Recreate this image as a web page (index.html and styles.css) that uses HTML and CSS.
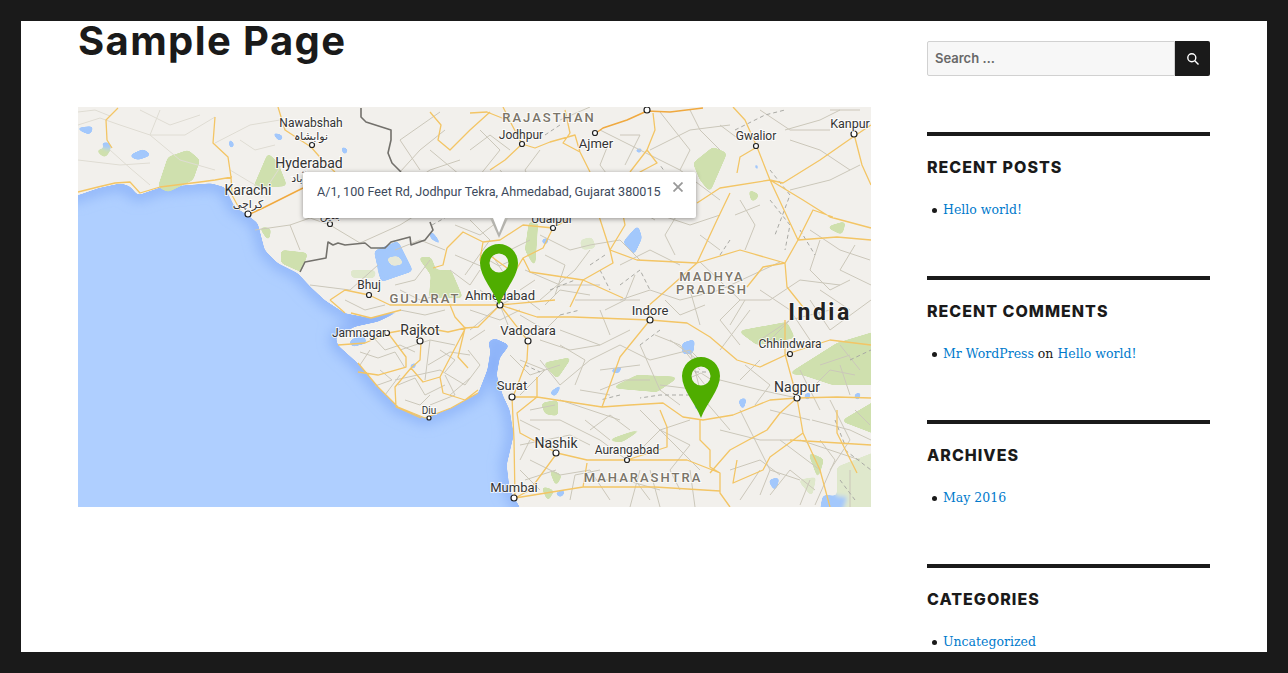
FILE: index.html
```html
<!DOCTYPE html>
<html lang="en">
<head>
    <meta charset="UTF-8">
    <title>Sample Page</title>
    <link rel="stylesheet" href="styles.css">
</head>
<body>
<div class="site">
    <main class="content">
        <h1 class="entry-title">Sample Page</h1>
        <div class="map">
            <svg class="map-canvas" viewBox="78 107 793 400" width="793" height="400">
                <defs>
                    <filter id="coast-blur" x="-10%" y="-10%" width="120%" height="120%"><feGaussianBlur stdDeviation="7"/></filter>
                    <!-- rounds off the corners of hand-drawn polygons -->
                    <filter id="smooth" x="-5%" y="-5%" width="110%" height="110%">
                        <feGaussianBlur stdDeviation="2"/>
                        <feColorMatrix type="matrix" values="1 0 0 0 0 0 1 0 0 0 0 0 1 0 0 0 0 0 12 -5"/>
                    </filter>
                    <filter id="soften" x="-5%" y="-5%" width="110%" height="110%"><feGaussianBlur stdDeviation="0.3"/></filter>
                </defs>
                <rect class="sea" x="78" y="107" width="793" height="400"/>
                <path class="coast-glow" filter="url(#coast-blur)" d="M60 197 78 195 98 188 121 183 138 195 161 187 211 183 225 187 235 207 248 215 258 223 265 250 278 263 298 273 311 287 325 300 345 313 371 318 398 310 378 322 355 327 336 337 338 345 358 363 378 387 398 407 425 418 451 408 478 393 487 370 490 352 488 341 495 338 510 345 500 358 497 375 503 395 510 410 514 435 507 465 510 490 520 507 525 525"/>
                <path class="land" filter="url(#smooth)" d="M60 197 78 195 98 188 121 183 130 186 138 195 161 187 211 183 225 187 235 207 248 215 258 223 265 250 278 263 298 273 311 287 325 300 345 313 371 318 398 310 400 312 378 322 355 327 336 337 338 345 358 363 378 387 398 407 425 418 451 408 478 393 487 370 490 352 488 341 495 338 510 345 500 358 497 375 503 395 510 410 514 435 507 465 510 490 520 507 525 525 890 525 890 90 60 90Z"/>

                <g filter="url(#smooth)">
                    <path class="park" d="M168 157 188 150 200 160 193 180 168 192 158 187ZM268 153 278 163 287 186 253 188ZM281 250 308 253 301 272 281 263ZM259 227 271 228 269 242ZM418 257 431 257 436 270 451 270 463 298 429 298 431 275ZM529 222 538 222 535 268 525 250ZM693 163 713 147 727 153 710 192 700 180ZM826 227 846 221 842 235ZM611 388 637 375 679 377 657 392ZM543 363 572 357 557 379ZM541 403 558 400 558 416 545 414ZM738 331 787 322 795 338 757 345ZM788 374 837 343 880 330 880 385 833 385 803 375ZM808 452 824 459 818 479ZM605 441 648 426 622 442ZM841 421 880 398 880 436ZM748 189 760 195 752 203ZM549 469 562 475 556 487ZM541 486 554 490 548 502ZM95 150 112 148 105 158Z"/>
                    <path class="park-light" d="M350 270 375 270 375 278 352 278ZM580 240 592 237 596 248 582 250ZM837 467 880 450 880 515 837 515ZM798 480 816 477 812 497Z"/>
                    <path class="water" d="M374 251 398 241 413 271 381 282ZM430 229 445 248 430 238ZM638 225 642 238 634 255 623 242ZM682 343 695 339 693 354 682 354ZM549 393 564 382 555 397ZM74 128 94 126 90 135ZM99 142 112 143 108 150ZM128 156 143 149 152 155 138 160ZM270 131 284 136 280 142ZM340 145 349 150 344 156ZM228 136 235 145 230 150ZM633 150 644 147 640 154ZM540 240 550 237 546 246ZM498 211 512 205 508 214ZM693 405 702 401 698 412ZM738 400 747 397 743 412ZM853 395 862 391 858 402ZM803 395 812 391 808 402ZM823 495 847 497 842 512 820 510ZM768 480 780 477 775 492ZM608 371 624 365 618 374ZM554 493 567 489 561 498ZM349 341 363 334 367 343 352 347ZM408 366 418 361 414 370ZM756 160 760 172 754 168Z"/>
                </g>
                <path class="lake-isle" filter="url(#smooth)" d="M386 258 398 256 404 264 392 266Z"/>

                <g filter="url(#soften)">
                    <path class="road-faint" d="M78 125 100 118 120 125 150 135 185 135 215 117M78 160 120 165 150 163M110 150 130 168 150 185M280 120 250 125 215 143M230 170 250 182 265 190 285 160M78 112 95 110 110 116M140 110 170 125 200 115M150 135 180 160 215 170M240 140 255 150 275 145M160 110 150 135"/>
                    <path class="road-minor" d="M255 230 290 225 310 218 330 225 360 243M290 225 300 250M320 220 335 200 360 180M360 243 400 225 432 205M400 172 420 150 445 130M400 190 430 170 460 160M440 112 400 140 420 170M310 285 350 290 378 265M470 220 490 240 465 275M540 235 570 250 590 245 620 240 640 260M500 170 520 195 560 210 590 215M600 130 640 150 680 170 720 200M650 150 690 130 730 125M660 112 690 150 680 170M785 130 820 120 840 110M790 190 830 180 860 165M700 262 740 300 770 300 800 280 840 285M680 300 720 290 780 262M810 300 830 330 871 300M590 360 620 345 650 360 690 350 720 380M640 345 660 390 680 405M720 380 760 390 797 398M540 360 560 385 590 360M530 420 560 420 600 440 627 460M640 410 670 440 700 470M720 430 760 440 790 440M740 410 770 470 800 480M812 420 850 430 871 440M830 400 850 440 830 470M530 460 560 475 590 470M590 470 610 500M650 470 660 507M690 470 695 507M770 470 760 495M850 470 850 507M800 440 860 460M540 300 575 270 590 250M525 270 560 285 600 285M455 255 490 270M540 340 570 350 600 345M740 345 720 320 740 300M700 325 690 290"/>
                    <path class="road-minor" d="M470 310 500 320 520 310M480 290 500 305 520 295 540 310M490 285 500 305 510 330M470 330 500 305M400 350 430 340 455 345M430 340 425 380M395 380 440 370 465 385M520 360 545 370 520 395M520 420 540 430M520 445 545 440 556 453M525 480 556 470M560 400 590 410 620 420M655 335 680 345 700 370M620 300 650 290 680 300M840 345 860 370M820 365 850 355M760 360 740 380M770 410 810 420M690 420 660 430 640 450M560 120 590 107M690 110 700 130M760 110 790 130 830 130"/>
                    <path class="road-minor" d="M372 336 385 350 400 345 415 352M360 352 378 358 395 352 405 368M380 370 392 380 375 386M398 385 415 378 425 395 445 385M405 400 420 405 430 395M440 350 455 360 445 372M428 365 450 352 470 355M450 395 470 378M470 340 485 330M345 300 365 310 385 305M400 290 420 300 440 295M395 250 420 240 445 250M450 270 470 285 480 270M520 315 545 330 560 315M510 355 530 375 560 365M560 330 600 345 630 330M600 310 610 335M575 300 610 300 640 300M620 265 650 250 680 265M660 215 690 225 720 215M590 180 620 190 650 185M700 130 720 150M720 125 740 140M790 140 820 150 850 170M830 110 860 110M810 230 840 250 870 260M820 290 850 310M760 290 790 310 810 340M720 350 750 310M670 340 705 365M600 370 640 365M580 390 610 395M545 440 570 435 590 445M660 430 690 445M730 470 760 460 780 475M780 440 820 470M820 410 800 370M840 365 850 395M730 430 700 395 720 380M640 470 630 507M590 480 625 480 660 490M740 500 760 470M800 505 810 480M530 410 555 405M520 470 540 490M650 380 625 380 600 390M585 420 610 440M760 340 790 320 830 310"/>
                    <path class="road-minor" d="M485 258 499 266 515 259M490 252 503 272M685 380 701 373 718 384M692 368 705 385M540 150 525 170 535 190 565 195M480 130 500 150 480 175M610 140 600 165 615 185M665 195 680 210 665 235 675 255M740 200 755 225 745 250M820 240 810 270 830 290 850 280M855 245 840 270 871 285M605 310 625 300 635 275M665 300 680 315 705 305M745 300 730 325M770 340 790 320M560 345 585 360 575 385M590 430 610 415 630 430M660 385 700 390 690 350M745 365 770 385 755 405M815 385 830 370 855 375M690 445 670 470 680 490M600 470 575 475 570 500M635 480 650 500M770 495 790 470 815 490M530 440 520 460M855 410 870 425M820 440 835 460 815 505M450 200 470 205 490 195M500 220 480 235 455 225M430 260 415 280 395 285M400 310 425 315 445 310M370 350 360 365M385 395 400 375M430 405 455 395 445 375M468 350 480 365 465 385M545 255 565 265 555 295M510 250 530 240M535 280 520 290M545 305 560 290 590 295M600 215 630 205 655 220M700 235 720 250M735 215 760 205M620 135 640 135 625 165M470 150 490 135 510 150M430 150 460 175"/>
                    <path class="river" d="M690 190 672 182 660 165M735 130 765 115 785 110M770 170 790 195 775 235M770 200 790 225 785 250M620 285 640 270 650 290M600 270 610 290M550 290 575 280M560 315 580 310M590 265 605 255M800 230 815 255M730 240 720 255M840 480 855 500M835 420 845 445M690 395 660 395 640 398M620 395 600 400M640 345 660 330M545 135 560 125M432 225 450 215M525 365 540 372M688 372 712 372M850 360 871 350M845 450 871 470"/>
                    <path class="border" d="M361 108 361 117 366 122 391 130 391 140 388 153 392 163 401 172M300 272 305 262 326 258 328 242 333 245 338 243 345 245 365 243 371 248 385 248 391 242 410 237 411 245 425 240 433 230 430 222"/>

                    <path class="road-major" d="M118 108 106 120 107 140 112 148M78 192 98 187 115 183 130 182 140 193 160 187 200 182 215 180 232 177M215 117 213 143 228 157 231 177 232 195 240 210M278 107 285 130 311 147 325 163 335 172M430 112 441 125 438 140 450 150 470 130 490 112M470 113 487 112 507 120M503 107 512 125 522 144 535 148 550 142 575 135 580 152M522 144 505 160 490 170M565 110 570 133 563 143 580 152M653 113 655 130 647 150 657 163 640 172M647 150 630 172M580 152 590 172M733 107 745 120 757 147 770 180 783 183 820 160 853 137 871 125M737 173 740 157 757 147M854 134 862 165 871 185M770 180 803 200 830 217 871 228M770 180 720 188 697 203M770 180 798 240 813 210 833 217M798 240 837 237 871 240M798 240 785 263 763 267 747 287M785 263 787 287 803 307M697 263 717 220 730 193M697 263 670 287 647 307 650 320M697 263 637 260 610 250 597 210 603 183M610 250 613 263 583 280 570 307M785 263 740 250 697 263"/>
                    <path class="road-major" d="M500 305 537 317 573 317 650 320 687 323 710 337 737 360 760 367 790 353 830 340 871 345M650 320 620 357 602 407M602 407 537 397 513 397M602 407 630 405 663 403 683 417 703 420 733 415 770 400 797 398 837 397 871 398M797 398 780 413 767 430 730 450 710 473M700 420 700 440 710 450 710 467 720 473 720 493 730 507M557 453 587 460 627 460 667 447 667 427 660 410M627 460 687 460 720 473M837 410 837 433 857 473M528 342 527 360 513 397M557 453 530 490 515 498M720 491 655 487 583 487 515 498M537 377 537 397 517 413 520 433 557 453M583 487 587 463M737 460 733 483 763 470 770 457 803 433 797 398M797 398 785 354 785 320M803 433 820 470 830 507M500 305 528 341M512 397 514 440 515 498M790 440 871 445"/>
                    <path class="road-major" d="M338 345 365 343 388 333 421 327 448 332 465 328 478 327 500 305M388 333 406 357 406 367 378 375 358 372M421 342 420 360 411 368 423 382 440 377 466 327M440 377 443 393 465 400 478 390M411 368 395 387 396 407 421 418M448 300 455 317 465 328 458 357 468 368M351 313 371 318 401 310M358 363 378 387 398 407 425 418 451 408 478 393M330 300 345 313M369 295 345 290 330 300M369 295 390 305 437 305 500 305M447 248 463 232 483 242 500 240 523 225 553 228 543 248 523 258 530 272 550 275 583 280 623 298M447 248 443 265 433 268M500 305 510 280 523 258M500 305 480 260 483 242M500 305 555 300M553 228 575 215 590 205M640 172 620 200 625 225 610 250M492 257 507 268"/>
                    <path class="road-trunk" d="M596 133 603 128 627 120 647 111 670 112 703 108M248 215 265 207 285 197 303 188"/>
                </g>

                <g class="city-dots">
                    <circle cx="312" cy="145" r="2.5"/><circle cx="248" cy="214" r="3"/><circle cx="330" cy="224" r="2.5"/>
                    <circle cx="369" cy="295" r="2.5"/><circle cx="387" cy="333" r="2.5"/><circle cx="420" cy="341" r="3"/>
                    <circle cx="429" cy="418" r="2"/><circle cx="500" cy="305" r="3"/><circle cx="522" cy="144" r="2.5"/>
                    <circle cx="595" cy="133" r="2.5"/><circle cx="647" cy="110" r="3"/><circle cx="756" cy="146" r="2.5"/>
                    <circle cx="854" cy="134" r="3"/><circle cx="553" cy="228" r="2.5"/><circle cx="650" cy="320" r="3"/>
                    <circle cx="528" cy="341" r="3"/><circle cx="512" cy="397" r="3"/><circle cx="556" cy="453" r="3"/>
                    <circle cx="514" cy="498" r="3"/><circle cx="627" cy="460" r="2.5"/><circle cx="790" cy="354" r="2.5"/>
                    <circle cx="797" cy="398" r="3"/>
                </g>

                <g class="labels">
                    <text class="city" x="311" y="127">Nawabshah</text>
                    <text class="city urdu" x="311" y="140">نوابشاہ</text>
                    <text class="city big" x="309" y="168">Hyderabad</text>
                    <text class="city urdu" x="309" y="182">حیدرآباد</text>
                    <text class="city big" x="248" y="195">Karachi</text>
                    <text class="city urdu" x="248" y="208">کراچی</text>
                    <text class="city urdu" x="330" y="219">بدین</text>
                    <text class="city" x="369" y="289">Bhuj</text>
                    <text class="city" x="359" y="337">Jamnagar</text>
                    <text class="city big" x="420" y="335">Rajkot</text>
                    <text class="city tiny" x="429" y="414">Diu</text>
                    <text class="city mid" x="500" y="300">Ahmedabad</text>
                    <text class="city" x="521" y="139">Jodhpur</text>
                    <text class="city mid" x="596" y="148">Ajmer</text>
                    <text class="city" x="756" y="140">Gwalior</text>
                    <text class="city kanpur" x="850" y="128">Kanpur</text>
                    <text class="city" x="552" y="223">Udaipur</text>
                    <text class="city mid" x="650" y="315">Indore</text>
                    <text class="city mid" x="528" y="335">Vadodara</text>
                    <text class="city mid" x="512" y="390">Surat</text>
                    <text class="city big" x="556" y="448">Nashik</text>
                    <text class="city" x="627" y="454">Aurangabad</text>
                    <text class="city mid" x="514" y="492">Mumbai</text>
                    <text class="city" x="790" y="348">Chhindwara</text>
                    <text class="city big" x="797" y="392">Nagpur</text>
                    <text class="region" x="425" y="303">GUJARAT</text>
                    <text class="region" x="549" y="122">RAJASTHAN</text>
                    <text class="region" x="712" y="281">MADHYA</text>
                    <text class="region" x="712" y="294">PRADESH</text>
                    <text class="region" x="643" y="482">MAHARASHTRA</text>
                    <text class="country" x="820" y="320">India</text>
                </g>

                <path class="pin" transform="translate(499 244)" d="M0 61C-5 47-19 33-19 19A19 19 0 0 1 19 19C19 33 5 47 0 61ZM0 9.500A9.500 9.500 0 1 0 0 28.500 9.500 9.500 0 1 0 0 9.500Z"/>
                <path class="pin" transform="translate(701 357)" d="M0 61C-5 47-19 33-19 19A19 19 0 0 1 19 19C19 33 5 47 0 61ZM0 9.500A9.500 9.500 0 1 0 0 28.500 9.500 9.500 0 1 0 0 9.500Z"/>
            </svg>

            <div class="info-window">
                <span class="info-text">A/1, 100 Feet Rd, Jodhpur Tekra, Ahmedabad, Gujarat 380015</span>
                <svg class="info-close" viewBox="0 0 10 10" width="10" height="10"><path d="M0.500 0.500 9.500 9.500M9.500 0.500 0.500 9.500"/></svg>
                <span class="info-tail"></span>
            </div>
        </div>
    </main>

    <aside class="sidebar">
        <form class="search-form" action="#">
            <input class="search-field" type="search" placeholder="Search …">
            <button class="search-submit" type="button" aria-label="Search">
                <svg viewBox="0 0 16 16" width="16" height="16"><circle cx="6.800" cy="6.800" r="4"/><path d="M9.800 9.800 13.500 13.500"/></svg>
            </button>
        </form>

        <section class="widget">
            <h2 class="widget-title">Recent Posts</h2>
            <ul>
                <li><a href="#">Hello world!</a></li>
            </ul>
        </section>

        <section class="widget">
            <h2 class="widget-title">Recent Comments</h2>
            <ul>
                <li><a href="#">Mr WordPress</a> on <a href="#">Hello world!</a></li>
            </ul>
        </section>

        <section class="widget">
            <h2 class="widget-title">Archives</h2>
            <ul>
                <li><a href="#">May 2016</a></li>
            </ul>
        </section>

        <section class="widget">
            <h2 class="widget-title">Categories</h2>
            <ul>
                <li><a href="#">Uncategorized</a></li>
            </ul>
        </section>
    </aside>
</div>
</body>
</html>
```

FILE: styles.css
```css
/* General Reset */
* {
    margin: 0;
    padding: 0;
    box-sizing: border-box;
}

html, body {
    height: 100%;
    overflow: hidden;
}

body {
    background-color: #1a1a1a;
    color: #1a1a1a;
    padding: 21px;
    font-family: "DejaVu Serif", serif;
}

/* Page frame */
.site {
    height: 100%;
    background-color: #fff;
    padding: 0 57px;
    display: grid;
    grid-template-columns: 793px 283px;
    column-gap: 56px;
    align-items: start;
}

/* Main column */
.entry-title {
    font-family: Inter, sans-serif;
    font-size: 40px;
    font-weight: 700;
    line-height: 40px;
    letter-spacing: 1.400px;
    margin-bottom: 46px;
}

.map {
    position: relative;
    width: 793px;
    height: 400px;
}

.map-canvas {
    display: block;
    overflow: hidden;
}

/* Map shapes */
.sea { fill: #afcfff; }
.land { fill: #f2f0ec; }
.coast-glow { fill: none; stroke: #86adf7; stroke-width: 10; }
.park { fill: #cfe0ae; }
.park-light { fill: #dfe8cc; }
.water { fill: #a3c8fc; }
.lake-isle { fill: #e6e8d8; }
.road-faint { fill: none; stroke: #dfdcd3; stroke-width: 1; stroke-linejoin: round; }
.road-minor { fill: none; stroke: #cbc7ba; stroke-width: 1; stroke-linejoin: round; }
.road-major { fill: none; stroke: #f3c565; stroke-width: 1.300; stroke-linejoin: round; }
.road-trunk { fill: none; stroke: #f0a93f; stroke-width: 1.500; stroke-linejoin: round; }
.river { fill: none; stroke: #a9a9a4; stroke-width: 1; stroke-dasharray: 4 3; }
.border { fill: none; stroke: #73716c; stroke-width: 1.600; stroke-linejoin: round; }
.city-dots circle { fill: #fff; stroke: #222; stroke-width: 1.200; }

/* Map labels */
.labels text {
    text-anchor: middle;
    paint-order: stroke;
    stroke: rgba(255, 255, 255, 0.75);
    stroke-width: 2px;
    font-family: Roboto, sans-serif;
}

.city { font-size: 12px; fill: #333; }
.city.mid { font-size: 13px; }
.city.big { font-size: 14px; }
.city.tiny { font-size: 10px; }
.city.kanpur { font-size: 12.500px; }
.labels .urdu { font-family: "DejaVu Sans", sans-serif; font-size: 11px; }

.region {
    font-size: 13px;
    font-weight: 500;
    letter-spacing: 2px;
    fill: #7a7468;
}

.labels .country {
    font-size: 23px;
    font-weight: 700;
    letter-spacing: 2.500px;
    fill: #222;
}

.pin { fill: #4fad00; fill-rule: evenodd; }

/* Info window over the map */
.info-window {
    position: absolute;
    left: 225px;
    top: 65px;
    width: 393px;
    height: 46px;
    background-color: #fff;
    border-radius: 2px;
    box-shadow: 0 1px 5px rgba(0, 0, 0, 0.4);
    padding: 12px 14px;
}

.info-text {
    font-family: Roboto, sans-serif;
    font-size: 12.600px;
    line-height: 15px;
    color: #3d4a5c;
    white-space: nowrap;
    display: block;
}

.info-close {
    position: absolute;
    right: 13px;
    top: 10px;
}

.info-close path {
    fill: none;
    stroke: #999;
    stroke-width: 1.800;
}

.info-tail {
    position: absolute;
    left: 187px;
    top: 46px;
    width: 0;
    height: 0;
    border-left: 9px solid transparent;
    border-right: 9px solid transparent;
    border-top: 20px solid #b4b3ad;
}

.info-tail::after {
    content: "";
    position: absolute;
    left: -6px;
    top: -20px;
    width: 0;
    height: 0;
    border-left: 6px solid transparent;
    border-right: 6px solid transparent;
    border-top: 15px solid #fff;
}

/* Sidebar */
.sidebar {
    padding-top: 20px;
}

.search-form {
    display: flex;
    height: 35px;
    margin-bottom: 56px;
}

.search-field {
    flex: 1;
    min-width: 0;
    height: 35px;
    background-color: #f7f7f7;
    border: 1px solid #d1d1d1;
    border-radius: 2px 0 0 2px;
    padding: 0 7px 2px;
    font-family: Inter, sans-serif;
    font-size: 13px;
    font-weight: 600;
    color: #686868;
    outline: none;
}

.search-field::placeholder {
    color: #686868;
    opacity: 1;
}

.search-submit {
    width: 35px;
    height: 35px;
    background-color: #1a1a1a;
    border: none;
    border-radius: 0 2px 2px 0;
    display: flex;
    align-items: center;
    justify-content: center;
}

.search-submit svg {
    fill: none;
    stroke: #fff;
    stroke-width: 1.400;
}

.widget {
    border-top: 4px solid #1a1a1a;
    padding-top: 22px;
    margin-bottom: 58px;
}

.widget:last-child {
    margin-bottom: 0;
}

.widget-title {
    font-family: Inter, sans-serif;
    font-size: 16px;
    font-weight: 800;
    line-height: 18px;
    letter-spacing: 1px;
    text-transform: uppercase;
    margin-bottom: 24px;
}

.widget ul {
    list-style: none;
    padding-left: 16px;
}

.widget li {
    font-size: 12.500px;
    line-height: 18px;
    padding-top: 1px;
    margin-bottom: -1px;
}

.widget li::before {
    content: "";
    display: inline-block;
    width: 5px;
    height: 5px;
    border-radius: 50%;
    background-color: #1a1a1a;
    margin-left: -11px;
    margin-right: 6px;
    vertical-align: 1px;
}

.widget a {
    color: #007acc;
    text-decoration: none;
}
```
